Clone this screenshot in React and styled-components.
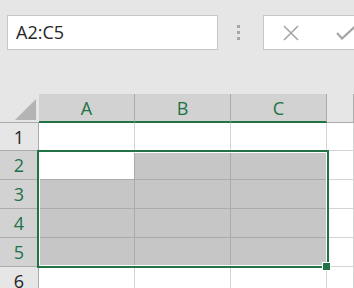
import React from 'react';
import styled, { createGlobalStyle } from 'styled-components';

const GREEN = '#217346';

const GlobalStyle = createGlobalStyle`
  html, body {
    margin: 0;
    padding: 0;
    background: #e6e6e6;
    overflow: hidden;
  }
  body {
    font-family: "Open Sans", "Noto Sans", sans-serif;
  }
`;

const columns = ['A', 'B', 'C'];
const rows = [1, 2, 3, 4, 5, 6];
const isSelRow = r => r >= 2 && r <= 5;

const App = () => (
  <Page>
    <GlobalStyle />
    <FormulaBar>
      <NameBox>A2:C5</NameBox>
      <Grip>
        <Dot />
        <Dot />
        <Dot />
      </Grip>
      <ActionBox>
        <Action>
          <svg width="18" height="16" viewBox="0 0 18 16">
            <path d="M2 1 L16 15 M16 1 L2 15" stroke="#a6a6a6" strokeWidth="1.6" fill="none" />
          </svg>
        </Action>
        <Action>
          <svg width="20" height="14" viewBox="0 0 20 14">
            <path d="M1 7 L6 12.5 L19 0.5" stroke="#a6a6a6" strokeWidth="2.2" fill="none" />
          </svg>
        </Action>
      </ActionBox>
    </FormulaBar>

    <Sheet>
      <Corner>
        <Triangle />
      </Corner>
      {columns.map(c => (
        <ColHead key={c} selected>{c}</ColHead>
      ))}
      <ColHead />

      {rows.map(r => (
        <React.Fragment key={r}>
          <RowHead selected={isSelRow(r)}>{r}</RowHead>
          {columns.map((c, i) => (
            <Cell
              key={c}
              selected={isSelRow(r) && !(r === 2 && i === 0)}
              inner={isSelRow(r) && r !== 5}
              innerCol={isSelRow(r) && i < 2}
            />
          ))}
          <Cell />
        </React.Fragment>
      ))}

      <Selection>
        <Handle />
      </Selection>
    </Sheet>
  </Page>
);

const Page = styled.div`
  width: 354px;
  height: 288px;
  overflow: hidden;
  background: #e6e6e6;
`;

const FormulaBar = styled.div`
  display: flex;
  align-items: center;
  height: 35px;
  padding: 15px 0 0 7px;
  margin-bottom: 44px;
`;

const NameBox = styled.div`
  box-sizing: border-box;
  flex-shrink: 0;
  width: 211px;
  height: 35px;
  background: #fff;
  border: 1px solid #c6c6c6;
  padding-left: 8px;
  font-size: 18px;
  line-height: 33px;
  color: #262626;
`;

const Grip = styled.div`
  flex-shrink: 0;
  display: flex;
  flex-direction: column;
  gap: 3px;
  margin: 0 23px 0 19px;
`;

const Dot = styled.div`
  width: 3px;
  height: 3px;
  background: #a6a6a6;
`;

const ActionBox = styled.div`
  box-sizing: border-box;
  flex-shrink: 0;
  display: flex;
  align-items: center;
  gap: 36px;
  width: 120px;
  height: 35px;
  background: #fff;
  border: 1px solid #c6c6c6;
  border-right: none;
  padding-left: 18px;
`;

const Action = styled.div`
  display: flex;
  align-items: center;
`;

const Sheet = styled.div`
  position: relative;
  display: grid;
  grid-template-columns: 39px 96px 96px 96px 1fr;
  grid-template-rows: 29px 28px repeat(4, 29px) 29px;
  background: #fff;
`;

const Corner = styled.div`
  position: relative;
  background: #e6e6e6;
  border-bottom: 1px solid #ababab;
`;

const Triangle = styled.div`
  position: absolute;
  right: 3px;
  bottom: 2px;
  width: 0;
  height: 0;
  border-left: 21px solid transparent;
  border-bottom: 21px solid #b4b4b4;
`;

const ColHead = styled.div`
  box-sizing: border-box;
  display: flex;
  align-items: center;
  justify-content: center;
  background: ${p => (p.selected ? '#d2d2d2' : '#e6e6e6')};
  color: ${p => (p.selected ? GREEN : '#222')};
  border-right: 1px solid #ababab;
  border-bottom: ${p => (p.selected ? `2px solid ${GREEN}` : '1px solid #ababab')};
  font-size: 18px;
  padding-top: 1px;
`;

const RowHead = styled.div`
  box-sizing: border-box;
  display: flex;
  align-items: center;
  justify-content: center;
  background: ${p => (p.selected ? '#d2d2d2' : '#e6e6e6')};
  color: ${p => (p.selected ? GREEN : '#222')};
  border-right: 1px solid #ababab;
  border-bottom: 1px solid #ababab;
  font-size: 18px;
`;

const Cell = styled.div`
  box-sizing: border-box;
  background: ${p => (p.selected ? '#c6c6c6' : '#fff')};
  border-right: 1px solid ${p => (p.innerCol ? '#ababab' : '#d4d4d4')};
  border-bottom: 1px solid ${p => (p.inner ? '#ababab' : '#d4d4d4')};
`;

const Selection = styled.div`
  position: absolute;
  left: 37px;
  top: 56px;
  width: 292px;
  height: 118px;
  box-sizing: border-box;
  border: 2px solid ${GREEN};
  box-shadow: inset 0 0 0 1px #fff;
  pointer-events: none;
`;

const Handle = styled.div`
  position: absolute;
  right: -3px;
  bottom: -4px;
  width: 7px;
  height: 7px;
  background: ${GREEN};
  outline: 1px solid #fff;
`;

export default App;
